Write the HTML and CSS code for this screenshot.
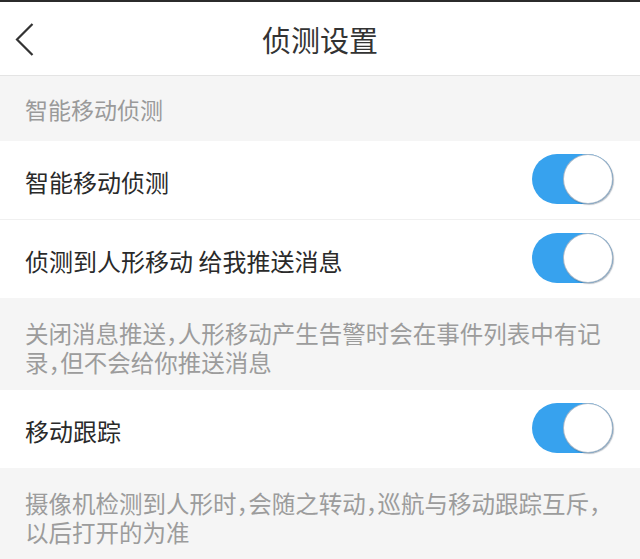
FILE: index.html
```html
<!DOCTYPE html>
<html lang="zh-CN">
<head>
    <meta charset="UTF-8">
    <meta name="viewport" content="width=device-width, initial-scale=1.0">
    <title>侦测设置</title>
    <link rel="stylesheet" href="styles.css">
</head>
<body>

<div class="status-line"></div>
<header class="nav">
    <a class="back" href="#">
        <svg width="20" height="34" viewBox="0 0 20 34">
            <polyline points="17.5,2 2,17.5 17.5,33" fill="none" stroke="#333" stroke-width="2.2"/>
        </svg>
    </a>
    <h1>侦测设置</h1>
    <span></span>
</header>

<div class="section-title">智能移动侦测</div>
<div class="group">
    <div class="row">
        <span class="label">智能移动侦测</span>
        <span class="switch on"><span class="knob"></span></span>
    </div>
    <div class="row">
        <span class="label">侦测到人形移动 给我推送消息</span>
        <span class="switch on"><span class="knob"></span></span>
    </div>
</div>
<p class="note">关闭消息推送，人形移动产生告警时会在事件列表中有记<br>录，但不会给你推送消息</p>

<div class="group">
    <div class="row">
        <span class="label">移动跟踪</span>
        <span class="switch on"><span class="knob"></span></span>
    </div>
</div>
<p class="note">摄像机检测到人形时，会随之转动，巡航与移动跟踪互斥，<br>以后打开的为准</p>

</body>
</html>
```

FILE: styles.css
```css
body {
    font-family: 'Noto Sans CJK SC', 'Noto Sans', sans-serif;
    background-color: #f5f5f5;
    margin: 0;
    color: #333;
}
.status-line {
    height: 2px;
    background: #2b2b2b;
}
.nav {
    display: grid;
    grid-template-columns: 1fr auto 1fr;
    align-items: center;
    height: 74px;
    padding-top: 1px;
    box-sizing: border-box;
    background: #fff;
    border-bottom: 1px solid #e4e4e4;
}
.back {
    display: flex;
    padding-left: 15px;
    width: 20px;
}
.nav h1 {
    margin: 0;
    font-size: 29px;
    font-weight: normal;
    line-height: 36px;
    color: #333;
}
.section-title {
    padding: 19px 25px 17px;
    font-size: 23px;
    line-height: 29px;
    color: #9a9a9a;
}
.group {
    background: #fff;
}
.row {
    display: flex;
    align-items: center;
    justify-content: space-between;
    height: 78px;
    padding: 0 27px 0 25px;
}
.row + .row {
    border-top: 1px solid #f0f0f0;
}
.label {
    font-size: 24px;
    line-height: 30px;
    padding-top: 3px;
    color: #2a2a2a;
}
.switch {
    display: flex;
    justify-content: flex-start;
    width: 81px;
    height: 50px;
    border-radius: 25px;
    background: #d8d8d8;
    margin-bottom: 2px;
}
.switch.on {
    justify-content: flex-end;
    background: #37a2ee;
}
.knob {
    width: 48px;
    height: 48px;
    border-radius: 50%;
    background: #fff;
    border: 1px solid rgba(40, 80, 120, 0.4);
    box-shadow: 1px 1px 1px rgba(0, 30, 60, 0.3);
}
.note {
    margin: 0;
    padding: 21px 10px 13px 25px;
    font-size: 23.5px;
    line-height: 29px;
    font-feature-settings: "halt";
    color: #9c9c9c;
}
```
